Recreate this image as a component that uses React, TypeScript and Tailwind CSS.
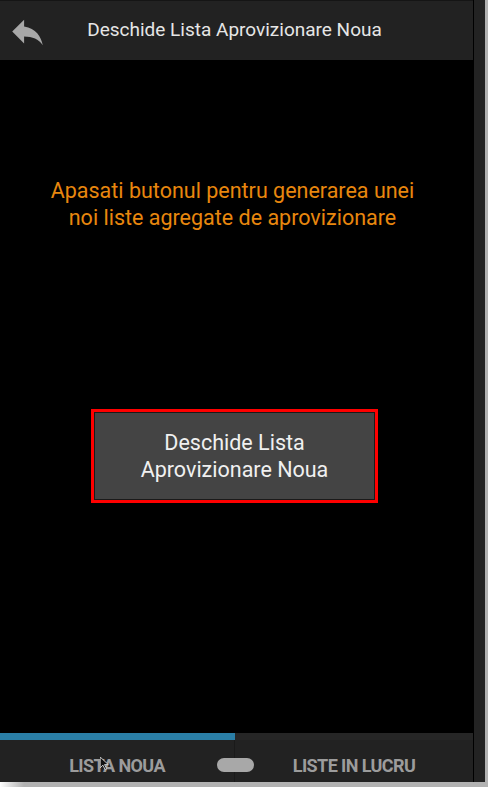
import React from "react";

export default function App() {
  return (
    <div className="w-[488px] h-[787px] bg-[#b2b2b2] overflow-hidden relative" style={{ fontFamily: "Roboto, 'Noto Sans', sans-serif" }}>
      <div className="absolute left-0 bottom-0 w-[24px] h-[5px] bg-gradient-to-r from-white to-[#b2b2b2]" />
      <div className="w-[485px] h-[782px] flex flex-row bg-[#232323]">
        <div className="w-[473px] h-full flex flex-col bg-black">
          <div className="h-[60px] bg-[#222222] border-t border-[#151515] flex items-center relative">
            <svg className="absolute left-[12px] top-[17px]" width="31" height="28" viewBox="3 4 18 16.5" fill="#a8a8a8">
              <path d="M10 9V5l-7 7 7 7v-4.1c5 0 8.5 1.6 11 5.1-1-5-4-10-11-11z" />
            </svg>
            <div className="flex-1 text-center text-[19px] text-[#e6e6e6] pr-[4px]">Deschide Lista Aprovizionare Noua</div>
          </div>
          <div className="flex-1 flex flex-col items-center">
            <div className="mt-[117px] mr-[8px] text-center text-[21.5px] leading-[27px] text-[#e8870e] whitespace-nowrap">
              Apasati butonul pentru generarea unei
              <br />
              noi liste agregate de aprovizionare
            </div>
            <div className="mt-[178px] mr-[4px] w-[287px] h-[94px] border-[3px] border-[#ff0000] bg-[#1a1a1a] p-[1px]">
              <div className="w-full h-full bg-[#444444] flex items-center justify-center text-center text-[21.5px] leading-[27px] text-[#f0f0f0] whitespace-nowrap">
                Deschide Lista
                <br />
                Aprovizionare Noua
              </div>
            </div>
          </div>
          <div className="h-[49px] flex flex-col bg-[#222222] relative">
            <div className="h-[7px] flex flex-row">
              <div className="w-[235px] bg-[#2a7ea6]" />
              <div className="flex-1 bg-[#262626]" />
            </div>
            <div className="flex-1 flex flex-row">
              <div className="w-[235px] flex items-center justify-center pt-[9px] text-[18px] font-bold tracking-[-0.6px] text-[#9c9c9c] border-r border-[#1a1a1a] relative">
                LISTA NOUA
                <svg className="absolute left-[100px] top-[17px]" width="9" height="13" viewBox="0 0 8 12">
                  <path d="M0 0 L0 10 L2.5 7.5 L4.5 11.5 L6 10.8 L4 7 L7.5 7 Z" fill="#111" stroke="#ddd" strokeWidth="0.8" />
                </svg>
              </div>
              <div className="flex-1 flex items-center justify-center pt-[9px] text-[18px] font-bold tracking-[-0.6px] text-[#9c9c9c]">
                LISTE IN LUCRU
              </div>
            </div>
            <div className="absolute left-[217px] top-[25px] w-[37px] h-[14px] rounded-full bg-[#a8a8a8]" />
          </div>
        </div>
        <div className="w-[1px] h-full bg-black" />
        <div className="w-[11px] h-full bg-[#232323]" />
      </div>
    </div>
  );
}
